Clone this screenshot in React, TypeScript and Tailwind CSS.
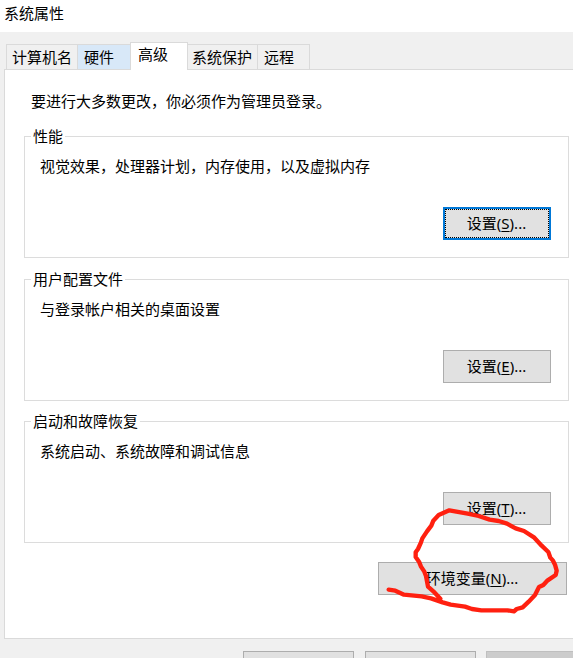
import type { ReactNode } from 'react';
import clsx from 'clsx';

interface Tab {
  label: string;
  className: string;
}

const tabs: Tab[] = [
  { label: '计算机名', className: 'h-[25px] w-[71px] border-l bg-[#f0f0f0] pl-[5px] leading-6' },
  { label: '硬件', className: 'h-[25px] w-[53px] border-l bg-[#d8e8f8] pl-1.5 leading-6' },
  { label: '高级', className: 'z-10 -mb-px h-7 w-[58px] border-x bg-white pl-[7px] leading-[23px]' },
  { label: '系统保护', className: 'h-[25px] w-[69px] bg-[#f0f0f0] pl-1 leading-6' },
  { label: '远程', className: 'h-[25px] w-[53px] border-x bg-[#f0f0f0] pl-1.5 leading-6' },
];

interface ButtonProps {
  label: string;
  accessKey: string;
  focused?: boolean;
  className?: string;
}

function Button({ label, accessKey, focused, className = 'w-[108px]' }: ButtonProps) {
  return (
    <button
      className={clsx(
        'h-[33px] shrink-0 whitespace-nowrap bg-[#e1e1e1]',
        focused ? 'border-2 border-[#0078d7]' : 'border border-[#adadad]',
        className,
      )}
    >
      <span
        className={clsx(
          'flex h-full items-center justify-center pr-px',
          focused && 'border border-dotted border-black',
        )}
      >
        {label}(<span className="underline underline-offset-2">{accessKey}</span>)...
      </span>
    </button>
  );
}

interface GroupProps {
  title: string;
  text: string;
  children: ReactNode;
}

function Group({ title, text, children }: GroupProps) {
  return (
    <fieldset className="flex h-[132px] w-[545px] flex-col border border-[#dcdcdc] px-[15px]">
      <legend className="-ml-[9px] h-[21px] px-0.5 leading-[21px]">{title}</legend>
      <p className="mt-[9px] h-5 leading-5">{text}</p>
      <div className="mt-[31px] flex justify-end pr-0.5">{children}</div>
    </fieldset>
  );
}

export default function App() {
  return (
    <div className="relative flex h-[658px] w-[573px] flex-col overflow-hidden bg-[#f0f0f0] font-['Noto_Sans','Noto_Sans_CJK_SC',sans-serif] text-[15px] text-black">
      <header className="h-8 shrink-0 bg-white pl-1 leading-[26px]">系统属性</header>

      <nav className="flex h-[37px] shrink-0 items-end pl-1.5">
        {tabs.map((tab) => (
          <div
            key={tab.label}
            className={clsx(
              'relative shrink-0 whitespace-nowrap border-t border-[#dadada]',
              tab.className,
            )}
          >
            {tab.label}
          </div>
        ))}
      </nav>

      <main className="ml-1 flex h-[570px] w-[580px] shrink-0 flex-col border border-[#dadada] bg-white pl-[19px]">
        <p className="h-[56px] pl-[7px] pt-[21px] leading-5">要进行大多数更改，你必须作为管理员登录。</p>
        <Group title="性能" text="视觉效果，处理器计划，内存使用，以及虚拟内存">
          <Button label="设置" accessKey="S" focused />
        </Group>
        <div className="mt-[11px]">
          <Group title="用户配置文件" text="与登录帐户相关的桌面设置">
            <Button label="设置" accessKey="E" />
          </Group>
        </div>
        <div className="mt-2.5">
          <Group title="启动和故障恢复" text="系统启动、系统故障和调试信息">
            <Button label="设置" accessKey="T" />
          </Group>
        </div>
        <div className="mt-[19px] flex w-[543px] justify-end">
          <Button label="环境变量" accessKey="N" className="w-[189px]" />
        </div>
      </main>

      <footer className="mt-3 flex shrink-0 pl-[243px]">
        <div className="h-8 w-[111px] shrink-0 border border-[#adadad] bg-[#e1e1e1]" />
        <div className="ml-[11px] h-8 w-[111px] shrink-0 border border-[#adadad] bg-[#e1e1e1]" />
        <div className="ml-2.5 h-8 w-[111px] shrink-0 border border-[#bfbfbf] bg-[#cccccc]" />
      </footer>

      {/* hand-drawn marker around the environment variables button */}
      <svg
        className="pointer-events-none absolute left-[370px] top-[480px] h-[178px] w-[203px]"
        viewBox="0 0 609 534"
        fill="none"
        stroke="#ff2010"
        strokeWidth="13"
        strokeLinecap="round"
        strokeLinejoin="round"
      >
        <path d="M56 329L76 332L102 344L155 349L183 355L218 367L242 374L285 380L306 387L334 391L412 391L432 394L440 387L458 382L476 365L495 345L507 321L520 315L533 301L557 285L560 272L555 254L549 242L541 233L535 216L515 197L493 173L462 153L437 145L411 131L386 123L359 119L326 108L293 101L238 91L206 105L190 122L184 137L171 154L157 175L153 187L144 207L137 217L137 231L147 245L153 260L163 275L168 288L174 320L190 334L211 356" />
      </svg>
    </div>
  );
}
